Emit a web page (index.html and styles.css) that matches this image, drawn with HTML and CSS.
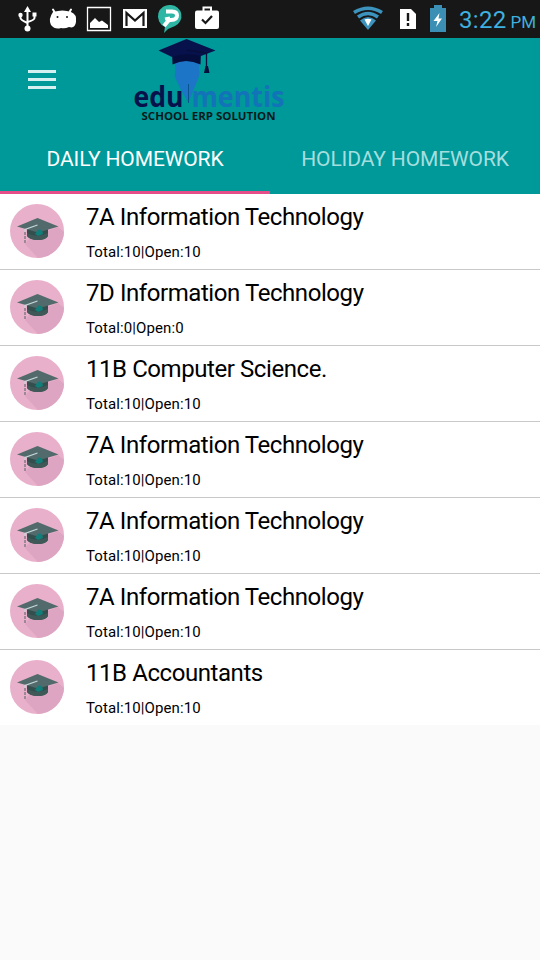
FILE: index.html
```html
<!DOCTYPE html>
<html lang="en">
<head>
    <meta charset="UTF-8">
    <meta name="viewport" content="width=device-width, initial-scale=1.0">
    <title>Edumentis Homework</title>
    <link rel="stylesheet" href="styles.css">
</head>
<body>
    <!-- Shared symbol for the homework rows -->
    <svg class="symbols" width="0" height="0">
        <symbol id="cap" viewBox="0 0 54 54">
            <circle cx="27" cy="27" r="27" fill="#e9b0cb"/>
            <path d="M48 23 54 28A27 27 0 0 1 28 54L15 40 20 34Z" fill="#dda5c1"/>
            <path d="M17 24V32Q20 36 28 36Q36 36 38 32V24Z" fill="#344e4e"/>
            <path d="M17 29Q27 35 38 29V32Q35 36 28 36Q20 36 17 32Z" fill="#405958"/>
            <path d="M7 22.500 27.500 14 48.500 22.500 28 28.500Z" fill="#526a6b"/>
            <path d="M25 30 28 25.500 32 26 33 30 28 32Z" fill="#127e79"/>
            <path d="M27.500 21 15 25.500V28" fill="none" stroke="#c5d7d8" stroke-width="1.200"/>
            <path d="M15 28V40" stroke="#77707e" stroke-width="1.300" stroke-dasharray="3 1"/>
        </symbol>
    </svg>

    <div class="status-bar">
        <div class="notifications">
            <svg viewBox="0 0 36 38" fill="none" stroke="#fff" stroke-width="2">
                <path d="M18.500 10V28M11.500 15V18Q11.500 20 18.500 23M25.500 15V18Q25.500 20 18.500 22"/>
                <path d="M18.500 6 22 12H15Z" fill="#fff" stroke="none"/>
                <circle cx="18.500" cy="28.500" r="3" fill="#fff" stroke="none"/>
                <circle cx="11.500" cy="15" r="2.200" fill="#fff" stroke="none"/>
                <path d="M23.500 12.500H27.500V16.500H23.500Z" fill="#fff" stroke="none"/>
            </svg>
            <svg viewBox="0 0 36 38">
                <path d="M8 12Q18 9 26 12Q32 14 31 22Q30 29 24 27Q20 29 16 28Q10 30 6 25Q3 19 8 12Z" fill="#fff"/>
                <path d="M10 13 8 9.500M24 13 26 9.500" stroke="#fff" stroke-width="2" stroke-linecap="round"/>
                <circle cx="12.500" cy="17" r="1" fill="#171717"/>
                <circle cx="22" cy="17" r="1" fill="#171717"/>
            </svg>
            <svg viewBox="0 0 36 38">
                <path d="M6.500 7.500H29.500V30.500H6.500Z" fill="none" stroke="#fff" stroke-width="1.300"/>
                <path d="M9 28V23L14 18 18 22 21 20.500 27 25V28Z" fill="#fff"/>
            </svg>
            <svg viewBox="0 0 36 38">
                <path d="M6 9H30V28H6Z" fill="#fff"/>
                <path d="M9.500 26V13L18 20.500 26.500 13V26" fill="none" stroke="#171717" stroke-width="2.200"/>
            </svg>
            <svg viewBox="0 0 36 38">
                <path d="M18 5A11 11 0 0 1 22 26L15 29 11 33 12 27A11.500 11.500 0 0 1 18 5Z" fill="#2fb5a3"/>
                <path d="M13 11.500H19Q24 11.500 24 15.500Q24 20 18 20H16L11 26" fill="none" stroke="#fff" stroke-width="4"/>
                <path d="M12 19 17 18" stroke="#fff" stroke-width="3"/>
            </svg>
            <svg viewBox="0 0 36 38">
                <path d="M14.500 11V7.500H22V11" fill="none" stroke="#fff" stroke-width="2"/>
                <rect x="6" y="10.500" width="24" height="18.500" rx="2" fill="#fff"/>
                <path d="M13 19.500 16.500 23 23 16" fill="none" stroke="#171717" stroke-width="2.200"/>
            </svg>
        </div>
        <div class="system">
            <svg class="wifi" viewBox="0 0 32 38" fill="none" stroke="#3c93bd" stroke-width="3.600">
                <path d="M2 12.500Q16 4 30 12.500M6 17Q16 10 26 17"/>
                <path d="M8 20.500Q16 13.500 24 20.500L16 30Z" fill="#3c93bd" stroke="none"/>
                <path d="M12.500 19.500Q16 18 19.500 19.500L16 26Z" fill="#fff" stroke="none"/>
            </svg>
            <svg class="sim" viewBox="0 0 16 38">
                <path d="M0 9H11L16 14V29H0Z" fill="#fff"/>
                <path d="M8 13V21M8 23V26" stroke="#171717" stroke-width="2.400"/>
            </svg>
            <svg class="battery" viewBox="0 0 16 38">
                <path d="M4 5H12V8H16V32H0V8H4Z" fill="#3b8fb5"/>
                <path d="M9.500 13 3.500 21H7.500L6 27 12 18.500H8.500Z" fill="#fff"/>
            </svg>
            <span class="time">3:22</span><span class="period">PM</span>
        </div>
    </div>

    <div class="header">
        <div class="toolbar">
            <div class="menu-button"><span></span><span></span><span></span></div>
            <svg class="logo" viewBox="0 0 160 87">
                <path d="M44 22H68V31Q69 37 67 41L62 53 57.500 65 49.500 51 43.500 38Q45 33 44 22Z" fill="#1c75c6"/>
                <path d="M57.500 46V65" stroke="#08548c" stroke-width="1"/>
                <path d="M41 14H70L69.500 26.500Q55 19.500 41.500 26.500Z" fill="#050d3c"/>
                <path d="M27.500 12.500 55.500 1 84.500 12.500 70 18Q55 14 41 19Z" fill="#07114b"/>
                <path d="M56 12 75.500 15V30" fill="none" stroke="#07103a" stroke-width="1.300"/>
                <path d="M74.500 28H77L78.500 35H73Z" fill="#07103a"/>
                <text class="logo-name edu" x="2.500" y="69" textLength="50" lengthAdjust="spacingAndGlyphs">edu</text>
                <text class="logo-name mentis" x="60.500" y="69" textLength="93" lengthAdjust="spacingAndGlyphs">mentis</text>
                <text class="logo-tagline" x="10.500" y="81.500" textLength="134" lengthAdjust="spacingAndGlyphs">SCHOOL ERP SOLUTION</text>
            </svg>
        </div>
        <div class="tabs">
            <div class="tab active"><span>DAILY HOMEWORK</span></div>
            <div class="tab"><span>HOLIDAY HOMEWORK</span></div>
        </div>
    </div>

    <div class="homework-list">
        <div class="homework-item">
            <svg class="item-icon"><use href="#cap"/></svg>
            <div class="item-text">
                <div class="item-title">7A Information Technology</div>
                <div class="item-count">Total:10|Open:10</div>
            </div>
        </div>
        <div class="homework-item">
            <svg class="item-icon"><use href="#cap"/></svg>
            <div class="item-text">
                <div class="item-title">7D Information Technology</div>
                <div class="item-count">Total:0|Open:0</div>
            </div>
        </div>
        <div class="homework-item">
            <svg class="item-icon"><use href="#cap"/></svg>
            <div class="item-text">
                <div class="item-title">11B Computer Science.</div>
                <div class="item-count">Total:10|Open:10</div>
            </div>
        </div>
        <div class="homework-item">
            <svg class="item-icon"><use href="#cap"/></svg>
            <div class="item-text">
                <div class="item-title">7A Information Technology</div>
                <div class="item-count">Total:10|Open:10</div>
            </div>
        </div>
        <div class="homework-item">
            <svg class="item-icon"><use href="#cap"/></svg>
            <div class="item-text">
                <div class="item-title">7A Information Technology</div>
                <div class="item-count">Total:10|Open:10</div>
            </div>
        </div>
        <div class="homework-item">
            <svg class="item-icon"><use href="#cap"/></svg>
            <div class="item-text">
                <div class="item-title">7A Information Technology</div>
                <div class="item-count">Total:10|Open:10</div>
            </div>
        </div>
        <div class="homework-item">
            <svg class="item-icon"><use href="#cap"/></svg>
            <div class="item-text">
                <div class="item-title">11B Accountants</div>
                <div class="item-count">Total:10|Open:10</div>
            </div>
        </div>
    </div>
</body>
</html>
```
FILE: styles.css
```css
* {
    box-sizing: border-box;
}
body {
    margin: 0;
    min-height: 960px;
    font-family: Roboto, sans-serif;
    background-color: #fafafa;
    color: #000;
}
svg {
    display: block;
    flex: none;
}
.symbols {
    height: 0;
}
.status-bar {
    display: flex;
    justify-content: space-between;
    height: 38px;
    padding: 0 3px 0 9px;
    background: #171717;
}
.notifications {
    display: flex;
}
.notifications svg {
    width: 36px;
    height: 38px;
}
.system {
    display: flex;
    align-items: baseline;
    width: 185px;
    color: #3fb0df;
    white-space: nowrap;
}
.system svg {
    width: 16px;
    height: 38px;
    align-self: flex-start;
}
.system .wifi {
    width: 32px;
}
.sim {
    margin-left: 16px;
}
.battery {
    margin-left: 14px;
}
.time {
    margin-left: 13px;
    font-size: 24px;
    line-height: 40px;
    letter-spacing: 0.3px;
}
.period {
    margin-left: 4px;
    font-size: 17px;
}
.header {
    height: 156px;
    background: #009999;
}
.toolbar {
    display: flex;
    height: 87px;
}
.menu-button {
    display: flex;
    flex-direction: column;
    gap: 5px;
    width: 28px;
    margin: 32px 0 0 28px;
}
.menu-button span {
    height: 3px;
    background: #d5f0f0;
}
.logo {
    width: 160px;
    height: 87px;
    margin-left: 75px;
    overflow: visible;
}
.logo-name {
    font-family: "Open Sans", sans-serif;
    font-size: 29px;
    font-weight: bold;
}
.edu {
    fill: #07114b;
}
.mentis {
    fill: #1273b8;
}
.logo-tagline {
    font-family: "Open Sans", sans-serif;
    font-size: 11px;
    font-weight: bold;
    fill: #06191c;
}
.tabs {
    display: flex;
    height: 69px;
}
.tab {
    flex: 1;
    padding-top: 21px;
    text-align: center;
    font-size: 21px;
    line-height: 26px;
    letter-spacing: -0.12px;
    color: #a5dede;
    white-space: nowrap;
    border-bottom: 3px solid transparent;
}
.tab.active {
    color: #fff;
    border-bottom-color: #e54e88;
}
.homework-list {
    background: #fff;
}
.homework-item {
    display: flex;
    height: 76px;
    padding: 10px;
    border-bottom: 1px solid #c8c8c8;
}
.homework-item:last-child {
    height: 75px;
    border-bottom: none;
}
.item-icon {
    width: 54px;
    height: 54px;
}
.item-text {
    margin-left: 22px;
    white-space: nowrap;
}
.item-title {
    font-size: 24px;
    line-height: 26px;
    letter-spacing: -0.43px;
}
.item-count {
    margin-top: 12px;
    font-size: 15px;
    line-height: 20px;
    letter-spacing: 0.1px;
}
```
